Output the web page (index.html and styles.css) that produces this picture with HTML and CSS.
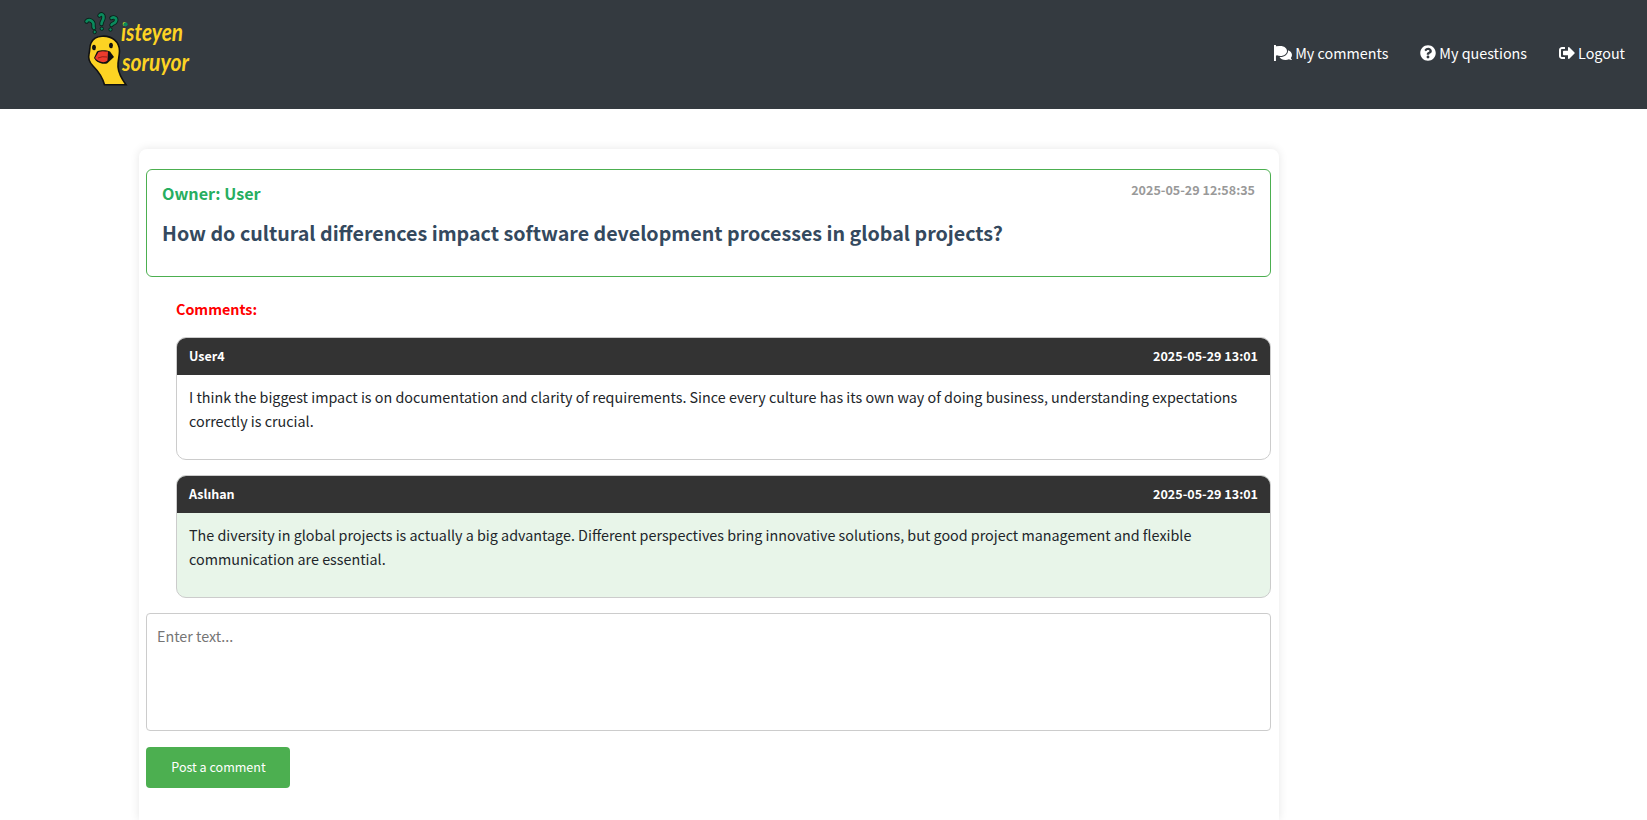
FILE: index.html
```html
<!DOCTYPE html>
<html lang="en">
<head>
<meta charset="utf-8">
<title>isteyen soruyor</title>
<link rel="stylesheet" href="styles.css">
</head>
<body>
<header class="navbar">
  <a class="brand" href="#">
    <svg class="logo" width="120" height="84" viewBox="80 8 120 84">
      <g fill="none" stroke="#08221a" stroke-width="4.4" stroke-linecap="round">
        <path d="M86.500 21.500C88 19 91.500 20 93 22.500S92.500 26 94 28"/><path d="M99.500 15.500C101.500 13 104 15 103.500 18S101.500 21.500 101.500 24"/><path d="M111.500 18C114 16.500 117 18 116 21S112 23 111.500 25"/>
      </g>
      <g fill="none" stroke="#0b8a5d" stroke-width="2.600" stroke-linecap="round">
        <path d="M86.500 21.500C88 19 91.500 20 93 22.500S92.500 26 94 28"/><path d="M99.500 15.500C101.500 13 104 15 103.500 18S101.500 21.500 101.500 24"/><path d="M111.500 18C114 16.500 117 18 116 21S112 23 111.500 25"/>
      </g>
      <g fill="#0b8a5d" stroke="#08221a"><circle cx="94.700" cy="32" r="1.700"/><circle cx="101.800" cy="28.700" r="1.700"/><circle cx="110.500" cy="29.500" r="1.700"/></g>
      <path d="M102 36.200C112 35.500 119.500 42 119.500 51C119.500 57 117.500 61 118 67C118.500 73 122.500 80 126 84.800H104.500C102.500 77 98 71 93 66C89 62 88 58 89 54C90 50 89.500 46 91 43C93 38.500 97 36.500 102 36.200Z" fill="#fdd323" stroke="#111" stroke-width="1.600"/>
      <ellipse cx="94" cy="47.500" rx="1.900" ry="2.800" fill="#111"/><ellipse cx="111" cy="45.500" rx="1.900" ry="2.800" fill="#111"/>
      <path d="M97 51.500C102 49.500 107 50.500 110 51.500L114 57L107 63.500C101 65 96 61.500 94 58Z" fill="#111"/>
      <path d="M98.500 52C102 50.500 105 51.500 108 51.500L107.500 60.500C104 64 98 61.500 95 58Z" fill="#ec3c2d"/>
      <path d="M98 58Q102 56 107 57" fill="none" stroke="#7c1912" stroke-width=".8"/>
      <text class="logo-text" x="121" y="40.500" textLength="62" lengthAdjust="spacingAndGlyphs">isteyen</text>
      <text class="logo-text" x="122" y="71" textLength="67" lengthAdjust="spacingAndGlyphs">soruyor</text>
      <circle cx="125.500" cy="24.300" r="2.100" fill="#0b8a5d"/>
    </svg>
  </a>
  <nav class="nav">
    <a class="nav-link" href="#">
      <svg width="18" height="16" viewBox="0 0 576 512" fill="#fff"><path d="M416 192c0-88.400-93.100-160-208-160S0 103.600 0 192c0 34.300 14.100 65.900 38 92-13.400 30.200-35.500 54.200-35.800 54.500-2.200 2.300-2.800 5.700-1.500 8.700S4.800 352 8 352c36.600 0 66.900-12.300 88.700-25 32.200 15.700 70.300 25 111.300 25 114.900 0 208-71.600 208-160zm122 220c23.900-26 38-57.700 38-92 0-66.900-53.500-124.200-129.300-148.100.9 6.600 1.300 13.300 1.300 20.100 0 105.900-107.700 192-240 192-10.800 0-21.300-.8-31.700-1.900C207.800 439.600 281.800 480 368 480c41 0 79.100-9.200 111.300-25 21.800 12.700 52.100 25 88.700 25 3.200 0 6.100-1.900 7.300-4.800 1.300-2.900.7-6.300-1.500-8.700-.3-.3-22.400-24.200-35.800-54.500z"/><path d="M0 0h62v512H0zM60 40h130v80H60z"/></svg>
      <span>My comments</span>
    </a>
    <a class="nav-link" href="#">
      <svg width="16" height="16" viewBox="0 0 512 512" fill="#fff"><path d="M504 256c0 137-111 248-248 248S8 393 8 256C8 119.100 119 8 256 8s248 111.100 248 248zM262.700 90c-54.500 0-89.300 23-116.500 63.800-3.500 5.300-2.400 12.400 2.700 16.300l34.700 26.300c5.200 3.900 12.600 3 16.700-2.100 17.900-22.700 30.100-35.800 57.300-35.800 20.400 0 45.700 13.100 45.700 33 0 15-12.400 22.700-32.500 34C247.100 238.500 216 254.900 216 296v4c0 6.600 5.400 12 12 12h56c6.600 0 12-5.400 12-12v-1.300c0-28.500 83.200-29.600 83.200-106.700 0-58-60.200-102-116.500-102zM256 338c-25.400 0-46 20.600-46 46s20.600 46 46 46 46-20.600 46-46-20.600-46-46-46z"/></svg>
      <span>My questions</span>
    </a>
    <a class="nav-link" href="#">
      <svg width="16" height="16" viewBox="0 0 512 512" fill="#fff"><path d="M497 273L329 441c-15 15-41 4.500-41-17v-96H152c-13.300 0-24-10.700-24-24v-96c0-13.300 10.700-24 24-24h136V88c0-21.400 25.900-32 41-17l168 168c9.300 9.400 9.300 24.600 0 34zM192 436v-40c0-6.600-5.400-12-12-12H96c-17.700 0-32-14.300-32-32V160c0-17.700 14.300-32 32-32h84c6.600 0 12-5.400 12-12V76c0-6.600-5.400-12-12-12H96c-53 0-96 43-96 96v192c0 53 43 96 96 96h84c6.600 0 12-5.400 12-12z"/></svg>
      <span>Logout</span>
    </a>
  </nav>
</header>
<main class="card">
  <section class="question">
    <div class="question-head"><span class="owner">Owner: User</span><time class="asked">2025-05-29 12:58:35</time></div>
    <h1 class="title">How do cultural differences impact software development processes in global projects?</h1>
  </section>
  <section class="comments">
    <h2 class="comments-title">Comments:</h2>
    <article class="comment">
      <div class="comment-head"><span>User4</span><time>2025-05-29 13:01</time></div>
      <p class="comment-body">I think the biggest impact is on documentation and clarity of requirements. Since every culture has its own way of doing business, understanding expectations<br>correctly is crucial.</p>
    </article>
    <article class="comment own">
      <div class="comment-head"><span>Aslıhan</span><time>2025-05-29 13:01</time></div>
      <p class="comment-body">The diversity in global projects is actually a big advantage. Different perspectives bring innovative solutions, but good project management and flexible<br>communication are essential.</p>
    </article>
  </section>
  <form class="reply">
    <textarea class="reply-text" placeholder="Enter text..."></textarea>
    <button class="reply-button" type="button">Post a comment</button>
  </form>
</main>
</body>
</html>
```
FILE: styles.css
```css
* { box-sizing: border-box; }
body {
  margin: 0;
  height: 820px;
  background: #fff;
  color: #212529;
  font-family: "Noto Sans CJK SC", "Noto Sans", sans-serif;
  font-size: 14.335px;
  line-height: 24px;
  overflow: hidden;
}
.navbar {
  height: 109px;
  padding: 8px 22px 0 80px;
  background: #343a40;
  display: flex;
  justify-content: space-between;
  align-items: flex-start;
}
.logo { display: block; }
.logo-text {
  font: italic 700 24px Lato, sans-serif;
  fill: #fdd323;
}
.nav { display: flex; gap: 32px; padding-top: 33px; }
.nav-link {
  display: flex;
  align-items: center;
  gap: 3px;
  color: #fff;
  text-decoration: none;
  white-space: nowrap;
}
.card {
  width: 1140px;
  height: 671px;
  margin: 40px 0 0 139px;
  padding: 20px 8px 0 7px;
  border-radius: 8px 8px 0 0;
  background: #fff;
  box-shadow: 0 0 10px rgba(0, 0, 0, .1);
}
.question {
  height: 108px;
  padding: 8px 15px;
  border: 1px solid #4caf50;
  border-radius: 6px;
}
.question-head { display: flex; justify-content: space-between; height: 32px; }
.owner { color: #27ae60; font-size: 16.150px; font-weight: 700; line-height: 30px; }
.asked { color: #999; font-size: 12.540px; font-weight: 700; }
.title {
  margin: 7px 0 0;
  color: #34495e;
  font-size: 19.660px;
  font-weight: 700;
  line-height: 32px;
  white-space: nowrap;
}
.comments { padding: 20px 0 0 30px; }
.comments-title { margin: 0 0 16px; color: red; font-size: 14.335px; font-weight: 700; line-height: 24px; }
.comment {
  height: 123px;
  margin-bottom: 15px;
  border: 1px solid #ccc;
  border-radius: 10px;
  overflow: hidden;
  background: #fff;
}
.comment.own { background: #e8f5e9; }
.comment-head {
  height: 37px;
  padding: 0 12px;
  display: flex;
  justify-content: space-between;
  background: #333;
  color: #fff;
  font-size: 12.540px;
  font-weight: 700;
  line-height: 35px;
}
.comment-body { margin: 0; padding: 10px 12px; white-space: nowrap; }
.reply { display: flex; flex-direction: column; align-items: flex-start; gap: 16px; }
.reply-text {
  display: block;
  width: 100%;
  height: 118px;
  margin: 0;
  padding: 10px;
  border: 1px solid #ccc;
  border-radius: 4px;
  font: inherit;
  resize: none;
}
.reply-text::placeholder { color: #757575; }
.reply-button {
  width: 144px;
  height: 41px;
  padding: 0 0 2px 1px;
  border: 0;
  border-radius: 4px;
  background: #4caf50;
  color: #fff;
  font: 400 12.540px "Noto Sans CJK SC", "Noto Sans", sans-serif;
}
```
